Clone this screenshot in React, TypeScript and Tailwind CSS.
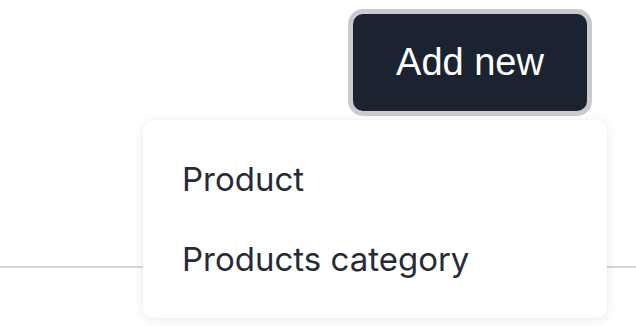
import React from "react";

export default function App() {
  return (
    <div className="relative w-[636px] h-[326px] overflow-hidden bg-white">
      <div className="flex justify-end pt-[14px] pr-[49px]">
        <button className="w-[234px] h-[97px] rounded-[10px] bg-[#1c2330] ring-[5px] ring-[#c9cbd0] text-white text-[38px] font-['Liberation_Sans',Arial,sans-serif] flex items-center justify-center">
          Add new
        </button>
      </div>
      <div className="mt-[155px] h-[2px] w-full bg-[#d6d7da]" />
      <div className="absolute left-[143px] top-[120px] w-[464px] h-[198px] rounded-[10px] bg-white shadow-[0_2px_12px_rgba(0,0,0,0.08),0_0_2px_rgba(0,0,0,0.06)] pt-[20px] font-['Inter',sans-serif] text-[33px] text-[#262c35]">
        <div className="h-[80px] flex items-center pl-[39px]">Product</div>
        <div className="h-[80px] flex items-center pl-[39px]">Products category</div>
      </div>
    </div>
  );
}
